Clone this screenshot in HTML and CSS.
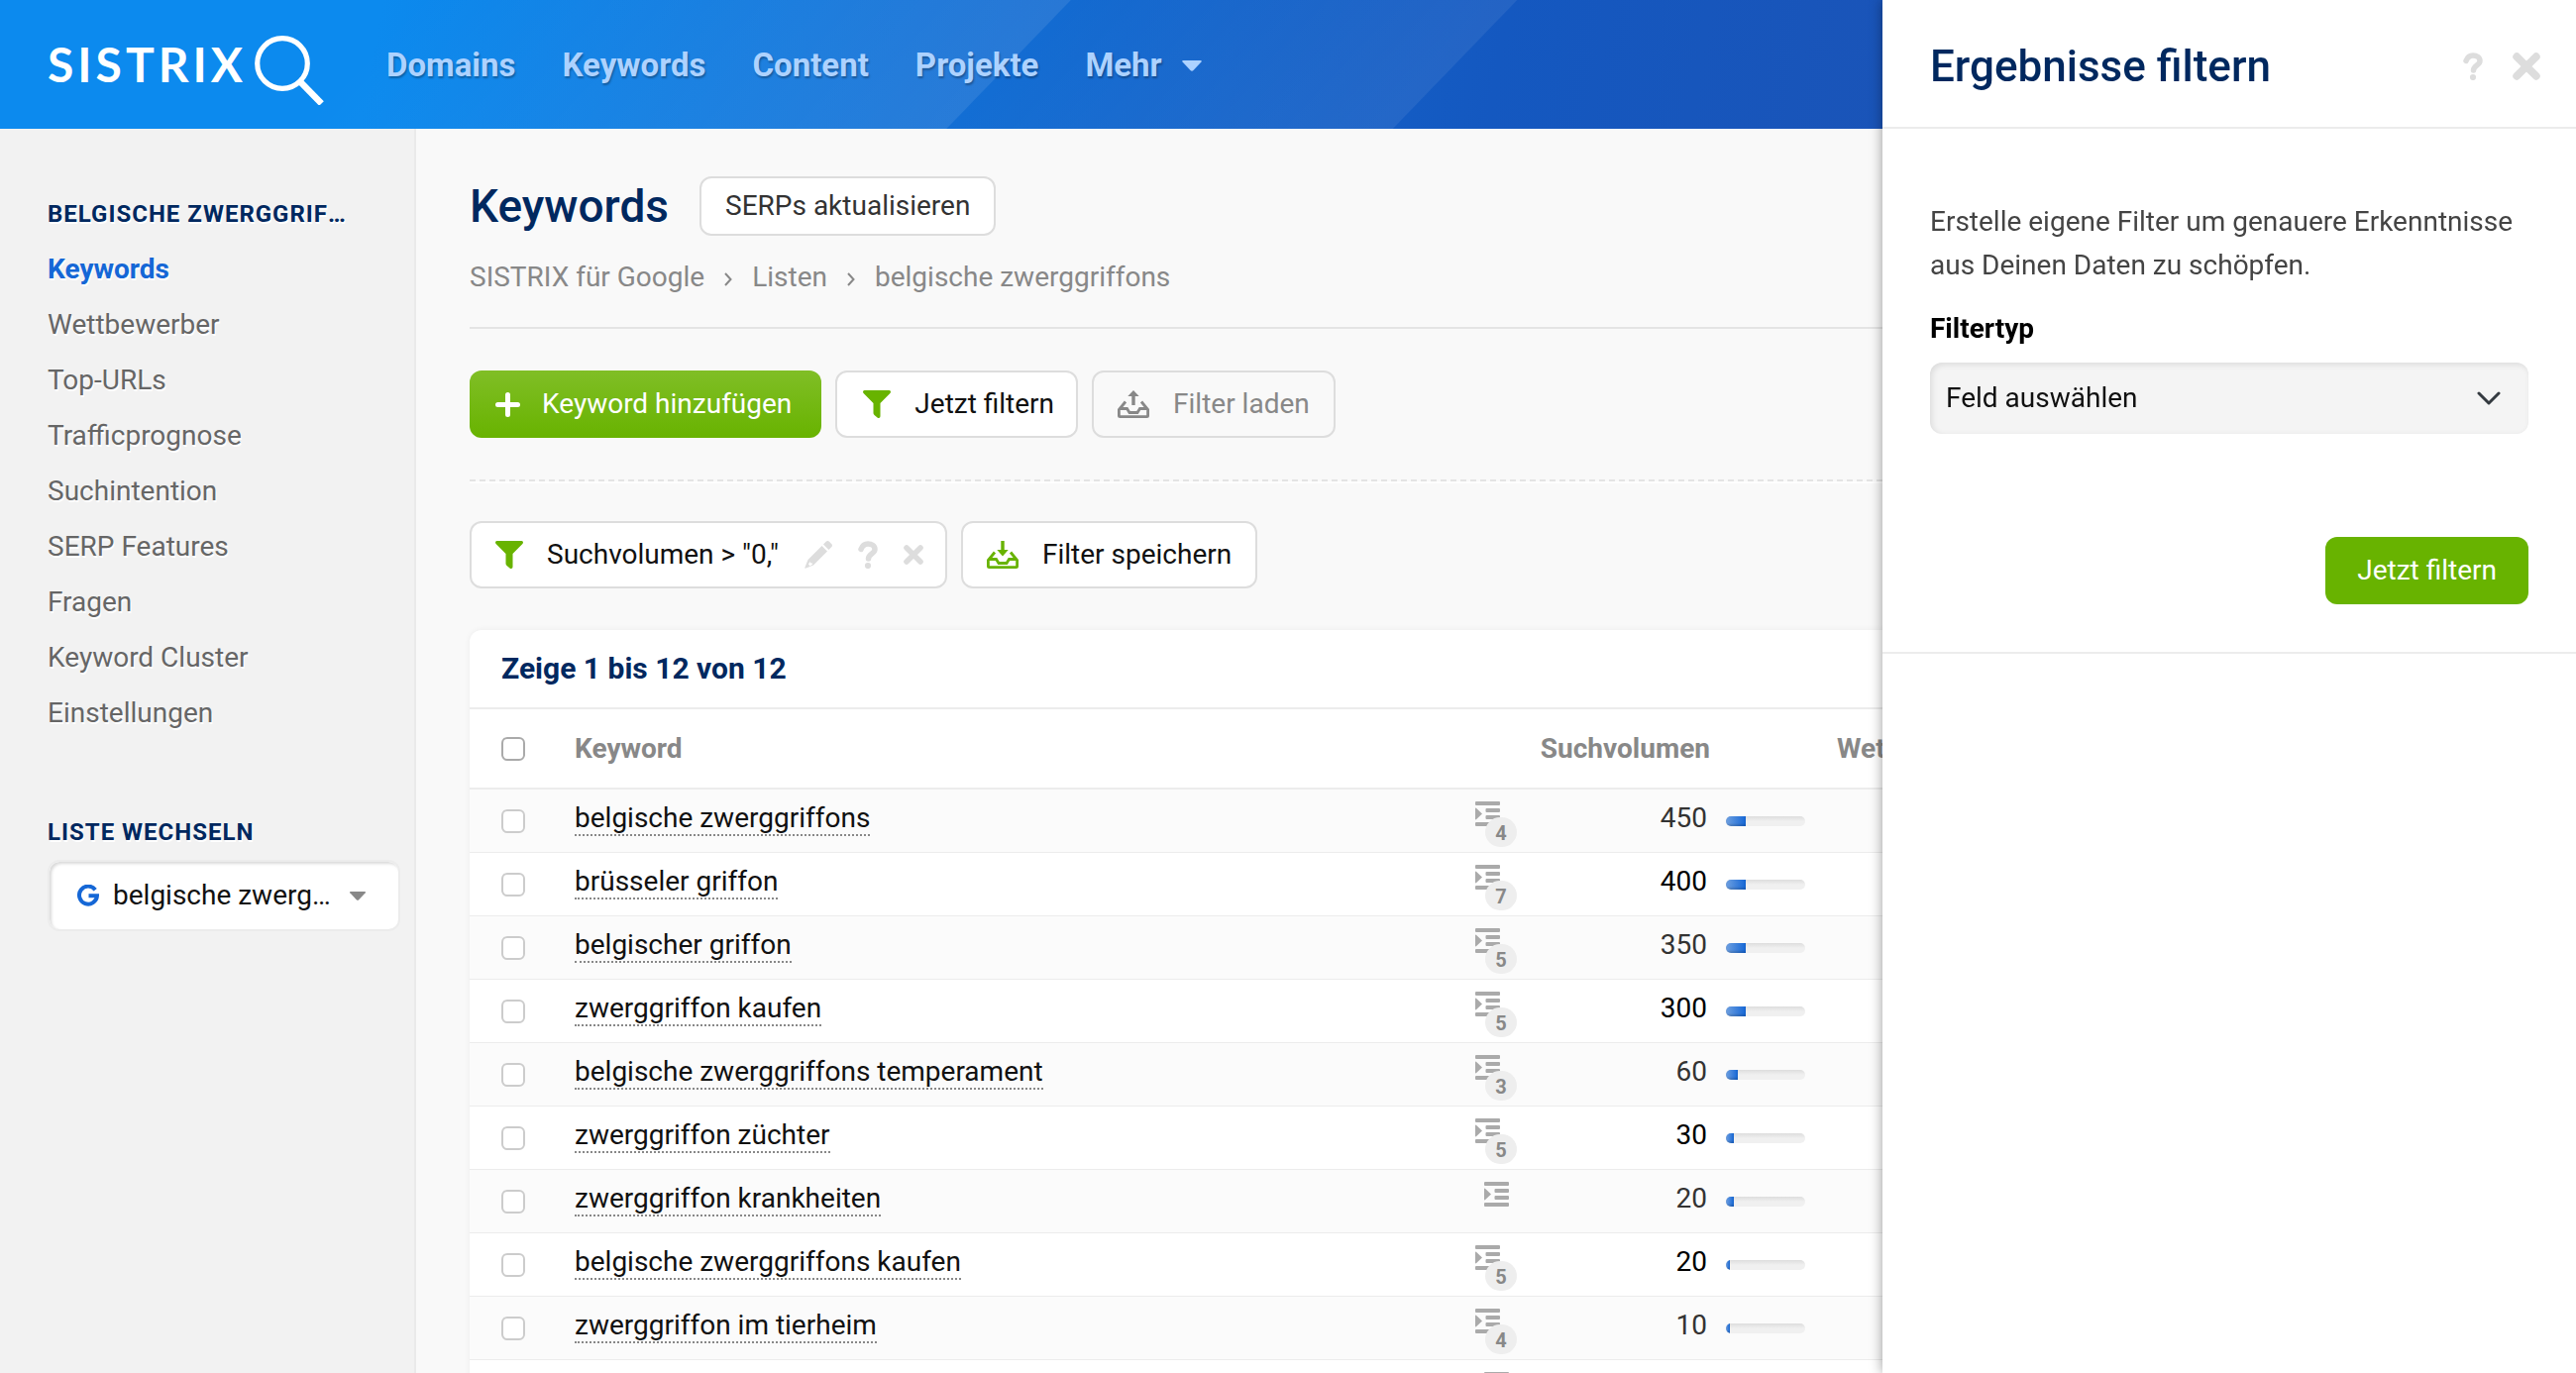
FILE: index.html
```html
<!DOCTYPE html>
<html lang="de">
<head>
<meta charset="utf-8">
<title>SISTRIX – Keywords</title>
<link rel="stylesheet" href="styles.css">
</head>
<body>
<svg width="0" height="0" class="sprite" aria-hidden="true">
  <symbol id="i-funnel" viewBox="0 0 28 28"><path d="M0 1.500Q0 0 1.500 0h25Q28 0 28 1.500q0 .8-.6 1.500L17.500 13v13.200q0 1.800-1.500 1.800-.8 0-1.500-.6l-3-2.400q-1-.8-1-2V13L.6 3Q0 2.300 0 1.500z" fill="currentColor"/></symbol>
  <symbol id="i-tray-up" viewBox="0 0 32 28"><path d="M14.300 15V6h-4L16 0l5.700 6h-4v9z" fill="currentColor"/><path d="M8 11.500 1.400 19.500v6q0 1.100 1.100 1.100h27q1.100 0 1.100-1.100v-6L24 11.500M1.500 18.500h8l2.500 4h8l2.500-4h8" fill="none" stroke="currentColor" stroke-width="2.800"/></symbol>
  <symbol id="i-tray-down" viewBox="0 0 32 28"><path d="M14.300 0v9h-4L16 15.500 21.700 9h-4V0z" fill="currentColor"/><path d="M8 11.500 1.400 19.500v6q0 1.100 1.100 1.100h27q1.100 0 1.100-1.100v-6L24 11.500M1.500 18.500h8l2.500 4h8l2.500-4h8" fill="none" stroke="currentColor" stroke-width="2.800"/></symbol>
  <symbol id="i-help" viewBox="0 0 20 28"><path d="M3 8.500C4.500 4.500 7 3 10 3c4 0 7 2 7 5.500 0 4.500-6.500 4.500-6.500 9.500" fill="none" stroke="currentColor" stroke-width="5.500" stroke-linecap="round"/><circle cx="10" cy="25" r="3.100" fill="currentColor"/></symbol>
  <symbol id="i-close" viewBox="0 0 20 20"><path d="m3 3 14 14M17 3 3 17" stroke="currentColor" stroke-width="5.600" stroke-linecap="round"/></symbol>
  <symbol id="i-pencil" viewBox="0 0 28 28"><path fill-rule="evenodd" d="m19 3.500 2.700-2.700q1.700-1.600 3.300 0l2.200 2.200q1.600 1.700 0 3.300L24.500 9zM17.500 5 23 10.500 9 24.500 1.500 27.500Q0 28 .5 26.500l3-7.500zM5.500 20.500l-1.700 3.700 1.200 0 0 1.200 3-1.600-.2-1.300-2.100-.2z" fill="currentColor"/></symbol>
  <symbol id="i-list" viewBox="0 0 25 25"><path d="M1 0h23q1 0 1 1v2q0 1-1 1H1q-1 0-1-1V1q0-1 1-1zM11.500 7H24q1 0 1 1v2q0 1-1 1H11.500q-1 0-1-1V8q0-1 1-1zM11.500 14H24q1 0 1 1v2q0 1-1 1H11.500q-1 0-1-1v-2q0-1 1-1zM1 21h23q1 0 1 1v2q0 1-1 1H1q-1 0-1-1v-2q0-1 1-1zM0 7.500Q0 6 1.200 7L7 12.500 1.200 18Q0 19 0 17.500z" fill="currentColor"/></symbol>
  <symbol id="i-caret" viewBox="0 0 20 11"><path d="M1.500 0h17q2 0 1 1.500l-8 8.500q-1.500 1.500-3 0l-8-8.500Q-.5 0 1.500 0z" fill="currentColor"/></symbol>
</svg>

<header class="topbar">
  <a class="logo" href="#" aria-label="SISTRIX">
    <span class="logo-text">SISTRIX</span>
    <svg class="logo-mark" viewBox="0 0 70 70" aria-hidden="true"><circle cx="28" cy="28" r="25.300" fill="none" stroke="#fff" stroke-width="5.200"/><path d="m46.500 47 21 21.500" stroke="#fff" stroke-width="6.500"/></svg>
  </a>
  <nav class="mainnav">
    <a href="#">Domains</a>
    <a href="#">Keywords</a>
    <a href="#">Content</a>
    <a href="#">Projekte</a>
    <a href="#" class="more">Mehr <svg class="caret"><use href="#i-caret"/></svg></a>
  </nav>
</header>

<div class="layout">
  <aside class="sidebar">
    <h2 class="side-title">Belgische Zwerggriffons</h2>
    <nav class="sidenav">
      <a href="#" class="active">Keywords</a>
      <a href="#">Wettbewerber</a>
      <a href="#">Top-URLs</a>
      <a href="#">Trafficprognose</a>
      <a href="#">Suchintention</a>
      <a href="#">SERP Features</a>
      <a href="#">Fragen</a>
      <a href="#">Keyword Cluster</a>
      <a href="#">Einstellungen</a>
    </nav>
    <h2 class="side-title">Liste wechseln</h2>
    <button class="list-switch" type="button">
      <svg class="google" viewBox="0 0 22 22" aria-hidden="true"><path d="M18.200 5.200A9 9 0 1 0 20 11.200H11.500" fill="none" stroke="currentColor" stroke-width="4"/></svg>
      <span class="list-name">belgische zwerggriffons</span>
      <svg class="caret"><use href="#i-caret"/></svg>
    </button>
  </aside>

  <main class="main">
    <div class="heading">
      <h1>Keywords</h1>
      <button class="btn btn-small" type="button">SERPs aktualisieren</button>
    </div>
    <nav class="crumbs">
      <a href="#">SISTRIX für Google</a>
      <svg class="sep" viewBox="0 0 8 14"><path d="m1 1 5.500 6L1 13" fill="none" stroke="currentColor" stroke-width="2"/></svg>
      <a href="#">Listen</a>
      <svg class="sep" viewBox="0 0 8 14"><path d="m1 1 5.500 6L1 13" fill="none" stroke="currentColor" stroke-width="2"/></svg>
      <a href="#">belgische zwerggriffons</a>
    </nav>

    <div class="toolbar">
      <button class="btn btn-add" type="button"><svg class="ico-plus" viewBox="0 0 25 25"><path d="M12.500 2.500v20M2.500 12.500h20" stroke="currentColor" stroke-width="5" stroke-linecap="round"/></svg>Keyword hinzufügen</button>
      <button class="btn" type="button"><svg class="ico green"><use href="#i-funnel"/></svg>Jetzt filtern</button>
      <button class="btn btn-tray btn-muted" type="button"><svg class="ico"><use href="#i-tray-up"/></svg>Filter laden</button>
    </div>

    <div class="toolbar filters">
      <div class="btn chip">
        <svg class="ico green"><use href="#i-funnel"/></svg>
        <span>Suchvolumen &gt; "0,"</span>
        <span class="chip-tools">
          <button type="button" aria-label="Bearbeiten"><svg class="t-edit"><use href="#i-pencil"/></svg></button>
          <button type="button" aria-label="Hilfe"><svg class="t-help"><use href="#i-help"/></svg></button>
          <button type="button" aria-label="Entfernen"><svg class="t-close"><use href="#i-close"/></svg></button>
        </span>
      </div>
      <button class="btn btn-tray" type="button"><svg class="ico green"><use href="#i-tray-down"/></svg>Filter speichern</button>
    </div>

    <section class="card">
      <h2 class="card-title">Zeige 1 bis 12 von 12</h2>
      <table class="grid">
        <colgroup><col class="c-check"><col class="c-key"><col class="c-icon"><col class="c-vol"><col class="c-bar"><col></colgroup>
        <thead>
          <tr><th><input type="checkbox" aria-label="Alle auswählen"></th><th>Keyword</th><th></th><th class="num">Suchvolumen</th><th></th><th>Wettbewerb</th></tr>
        </thead>
        <tbody>
          <tr><td><input type="checkbox" aria-label="belgische zwerggriffons"></td><td class="key"><a href="#">belgische zwerggriffons</a></td><td><span class="serp"><svg><use href="#i-list"/></svg><b>4</b></span></td><td class="num">450</td><td><div class="bar"><i style="width:25%"></i></div></td><td></td></tr>
          <tr><td><input type="checkbox" aria-label="brüsseler griffon"></td><td class="key"><a href="#">brüsseler griffon</a></td><td><span class="serp"><svg><use href="#i-list"/></svg><b>7</b></span></td><td class="num">400</td><td><div class="bar"><i style="width:25%"></i></div></td><td></td></tr>
          <tr><td><input type="checkbox" aria-label="belgischer griffon"></td><td class="key"><a href="#">belgischer griffon</a></td><td><span class="serp"><svg><use href="#i-list"/></svg><b>5</b></span></td><td class="num">350</td><td><div class="bar"><i style="width:25%"></i></div></td><td></td></tr>
          <tr><td><input type="checkbox" aria-label="zwerggriffon kaufen"></td><td class="key"><a href="#">zwerggriffon kaufen</a></td><td><span class="serp"><svg><use href="#i-list"/></svg><b>5</b></span></td><td class="num">300</td><td><div class="bar"><i style="width:25%"></i></div></td><td></td></tr>
          <tr><td><input type="checkbox" aria-label="belgische zwerggriffons temperament"></td><td class="key"><a href="#">belgische zwerggriffons temperament</a></td><td><span class="serp"><svg><use href="#i-list"/></svg><b>3</b></span></td><td class="num">60</td><td><div class="bar"><i style="width:15%"></i></div></td><td></td></tr>
          <tr><td><input type="checkbox" aria-label="zwerggriffon züchter"></td><td class="key"><a href="#">zwerggriffon züchter</a></td><td><span class="serp"><svg><use href="#i-list"/></svg><b>5</b></span></td><td class="num">30</td><td><div class="bar"><i style="width:10%"></i></div></td><td></td></tr>
          <tr><td><input type="checkbox" aria-label="zwerggriffon krankheiten"></td><td class="key"><a href="#">zwerggriffon krankheiten</a></td><td><span class="serp"><svg><use href="#i-list"/></svg></span></td><td class="num">20</td><td><div class="bar"><i style="width:10%"></i></div></td><td></td></tr>
          <tr><td><input type="checkbox" aria-label="belgische zwerggriffons kaufen"></td><td class="key"><a href="#">belgische zwerggriffons kaufen</a></td><td><span class="serp"><svg><use href="#i-list"/></svg><b>5</b></span></td><td class="num">20</td><td><div class="bar"><i style="width:5%"></i></div></td><td></td></tr>
          <tr><td><input type="checkbox" aria-label="zwerggriffon im tierheim"></td><td class="key"><a href="#">zwerggriffon im tierheim</a></td><td><span class="serp"><svg><use href="#i-list"/></svg><b>4</b></span></td><td class="num">10</td><td><div class="bar"><i style="width:5%"></i></div></td><td></td></tr>
          <tr><td></td><td></td><td><span class="serp"><svg><use href="#i-list"/></svg></span></td><td></td><td></td><td></td></tr>
        </tbody>
      </table>
    </section>
  </main>
</div>

<aside class="drawer">
  <header class="drawer-head">
    <h2>Ergebnisse filtern</h2>
    <button type="button" aria-label="Hilfe"><svg class="d-help"><use href="#i-help"/></svg></button>
    <button type="button" aria-label="Schließen"><svg class="d-close"><use href="#i-close"/></svg></button>
  </header>
  <form class="drawer-body">
    <p>Erstelle eigene Filter um genauere Erkenntnisse aus Deinen Daten zu schöpfen.</p>
    <label for="filtertyp">Filtertyp</label>
    <div class="select">
      <select id="filtertyp"><option>Feld auswählen</option></select>
      <svg viewBox="0 0 24 14" aria-hidden="true"><path d="m2 2 10 10L22 2" fill="none" stroke="currentColor" stroke-width="3" stroke-linecap="round" stroke-linejoin="round"/></svg>
    </div>
    <button class="btn btn-submit" type="button">Jetzt filtern</button>
  </form>
</aside>
</body>
</html>
```

FILE: styles.css
```css
* { box-sizing: border-box; }

body {
  margin: 0;
  height: 100vh;
  overflow: hidden;
  display: flex;
  flex-direction: column;
  background: #f9f9f9;
  color: #111;
  font: 28px/44px Roboto, "Liberation Sans", sans-serif;
}

h1, h2, p { margin: 0; }
a { color: inherit; text-decoration: none; }
button { font: inherit; color: inherit; margin: 0; padding: 0; border: 0; background: none; }
svg { display: block; flex: none; }
.sprite { position: absolute; }

/* top bar */
.topbar {
  flex: none;
  height: 130px;
  display: flex;
  align-items: center;
  padding-left: 48px;
  background:
    linear-gradient(134deg, rgba(255,255,255,0) 300px, rgba(255,255,255,.09) 777px, rgba(255,255,255,0) 778px),
    linear-gradient(134deg, rgba(255,255,255,0) 778px, rgba(255,255,255,.07) 1101px, rgba(255,255,255,0) 1102px),
    linear-gradient(100deg, #0c8aee 0, #0c8aee 380px, #136dd3 1000px, #1458c0 1500px, #1a54b8 1900px);
}
.logo { display: flex; align-items: center; gap: 8px; width: 342px; color: #fff; }
.logo-text { font: 700 48px/60px Lato, sans-serif; letter-spacing: 4px; }
.logo-mark { width: 70px; height: 70px; margin-top: 12px; }
.mainnav { display: flex; gap: 47px; padding-top: 2px; font-size: 33px; font-weight: 700; color: #add2ff; text-shadow: 1px 2px 2px rgba(0,0,0,.3); }
.more { display: flex; align-items: center; gap: 20px; }
.caret { width: 20px; height: 11px; }

.layout { flex: 1; min-height: 0; display: flex; }

/* sidebar */
.sidebar { flex: none; width: 420px; padding: 58px 14px 0 48px; background: #f2f2f2; border-right: 2px solid #eaeaea; text-shadow: 1px 2px 0 #fff; }
.side-title {
  width: 308px;
  overflow: hidden;
  text-overflow: ellipsis;
  white-space: nowrap;
  font-size: 24px;
  line-height: 56px;
  font-weight: 700;
  letter-spacing: 1px;
  text-transform: uppercase;
  color: #00285f;
}
.sidenav { display: flex; flex-direction: column; margin-bottom: 64px; line-height: 56px; color: #666; }
.sidenav .active { color: #1567d6; font-weight: 700; }
.list-switch {
  display: flex;
  align-items: center;
  width: 356px;
  height: 72px;
  padding: 0 32px 0 28px;
  border-radius: 12px;
  border: 2px solid #ececec;
  background: #fff;
  box-shadow: inset 2px 2px 3px rgba(0,0,0,.15);
}
.google { width: 22px; height: 22px; margin-right: 14px; color: #1567d6; }
.list-name { flex: 1; overflow: hidden; text-overflow: ellipsis; white-space: nowrap; text-align: left; }
.list-switch .caret { width: 18px; height: 9px; margin-left: 14px; color: #888; }

/* content */
.main { flex: 1; min-width: 0; padding: 48px 54px 0; }
.heading { display: flex; align-items: center; gap: 31px; height: 60px; }
h1 { font-size: 46px; line-height: 60px; font-weight: 500; color: #00285f; }

.btn {
  display: flex;
  align-items: center;
  height: 68px;
  padding: 0 22px 0 26px;
  border: 2px solid #ddd;
  border-radius: 12px;
  background: #fff;
  white-space: nowrap;
}
.btn-small { height: 60px; padding: 0 24px; color: #333; }
.crumbs { display: flex; align-items: center; gap: 20px; margin-top: 20px; padding-bottom: 28px; border-bottom: 2px solid #e4e4e4; color: #888; }
.sep { width: 8px; height: 14px; margin-top: 4px; }

.toolbar {
  display: flex;
  gap: 14px;
  padding: 42px 0 44px;
  background: repeating-linear-gradient(90deg, #e4e4e4 0 6px, transparent 6px 10px) 0 100% / 100% 2px no-repeat;
}
.filters { padding: 38px 0 42px; background: none; border-top: 2px solid #fff; }
.btn-add { padding: 0 30px 0 26px; border: 0; color: #fff; background: linear-gradient(#80be26, #68b300); }
.btn-muted { background: #f9f9f9; color: #888; }
.ico-plus { width: 25px; height: 25px; margin-right: 22px; }
.ico { width: 28px; height: 28px; margin-right: 24px; }
.btn-tray { padding: 0 24px; }
.btn-tray .ico { width: 32px; }
.chip { padding: 0 22px 0 24px; }
.green { color: #68b300; }
.chip-tools { display: flex; align-items: center; gap: 26px; margin-left: 26px; color: #ddd; }
.t-edit { width: 28px; height: 28px; }
.t-help { width: 20px; height: 28px; }
.t-close { width: 20px; height: 20px; }

/* result card */
.card { background: #fff; border-radius: 12px 12px 0 0; box-shadow: 0 0 6px rgba(0,0,0,.06); }
.card-title { padding: 0 32px; font-size: 30px; line-height: 78px; font-weight: 700; color: #00285f; border-bottom: 2px solid #ececec; }
.grid { width: 100%; table-layout: fixed; border-collapse: separate; border-spacing: 0; }
.c-check { width: 106px; }
.c-key { width: 894px; }
.c-icon { width: 72px; }
.c-vol { width: 180px; }
.c-bar { width: 128px; }
.grid th { height: 81px; padding: 0; border-bottom: 2px solid #ececec; font-weight: 700; text-align: left; color: #888; }
.grid td { height: 64px; padding: 0; border-bottom: 1px solid #ececec; line-height: 34px; }
.grid th:first-child, .grid td:first-child { padding-left: 32px; }
.grid .num { text-align: right; }
.grid td.key { padding-bottom: 6px; }
.grid td.num { padding: 0 3px 6px 0; color: #000; }
.grid tbody tr:nth-child(odd) { background: #fbfbfb; }
.grid tbody tr:nth-child(odd) .num { color: #333; }
.grid td a { border-bottom: 2px dotted #888; }
.grid input {
  appearance: none;
  display: block;
  width: 24px;
  height: 24px;
  margin: 0;
  border: 2px solid #ccc;
  border-radius: 6px;
  background: #fff;
}
.grid th input { border-color: #aaa; }
.serp { display: flex; justify-content: center; height: 40px; color: #aaa; }
.serp svg { width: 25px; height: 25px; }
.serp b { margin: 16px 0 0 -15px; width: 32px; height: 30px; border-radius: 16px; background: #eee; color: #888; font-size: 20px; line-height: 32px; text-align: center; }
.bar { width: 80px; height: 10px; margin-left: 16px; border-radius: 5px; overflow: hidden; background: linear-gradient(#ddd, #f0f0f0 50%); }
.bar i { display: block; height: 100%; background: linear-gradient(90deg, #6fa0e0, #1567d6); box-shadow: inset 0 -2px 2px rgba(0,0,0,.15); }

/* filter drawer */
.drawer { position: fixed; top: 0; right: 0; bottom: 0; width: 700px; background: #fff; box-shadow: 0 0 12px rgba(0,0,0,.4); }
.drawer-head { display: flex; align-items: center; gap: 30px; height: 130px; padding: 5px 36px 0 48px; border-bottom: 2px solid #ececec; color: #ddd; }
.drawer-head h2 { flex: 1; font-size: 44px; line-height: 60px; font-weight: 500; color: #00285f; }
.d-help { width: 20px; height: 28px; }
.d-close { width: 28px; height: 28px; }
.drawer-body { display: flex; flex-direction: column; padding: 72px 48px 48px; border-bottom: 2px solid #ececec; }
.drawer-body p { color: #444; }
.drawer-body label { margin: 20px 0 12px; font-weight: 700; color: #000; }
.select { display: grid; align-items: center; }
.select > * { grid-area: 1 / 1; }
.select select {
  appearance: none;
  width: 100%;
  height: 72px;
  padding: 0 16px;
  border: 0;
  border-radius: 12px;
  background: #f4f4f4;
  box-shadow: inset 2px 2px 6px rgba(0,0,0,.1);
  font: inherit;
  color: #111;
}
.select svg { justify-self: end; width: 24px; height: 14px; margin-right: 28px; color: #343a40; pointer-events: none; }
.btn-submit { align-self: flex-end; margin-top: 104px; padding: 0 32px; border: 0; background: #68b300; color: #fff; }
```
